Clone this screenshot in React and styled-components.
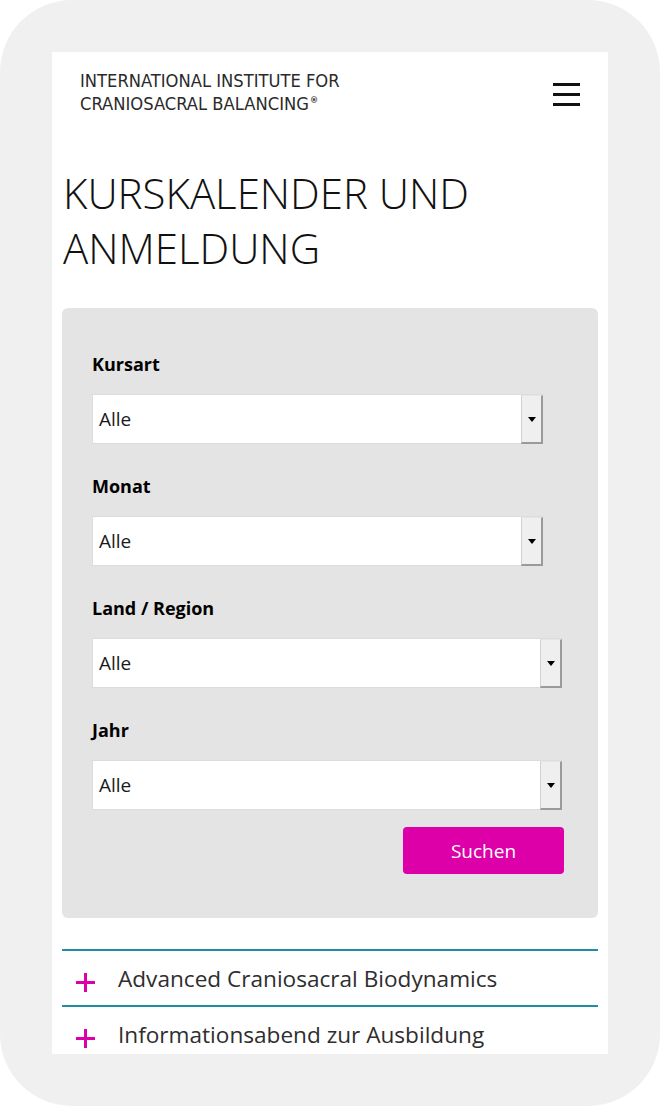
import React from "react";
import styled, { createGlobalStyle } from "styled-components";

const GlobalStyle = createGlobalStyle`
  html, body { margin: 0; padding: 0; background: #fff; }
  * { box-sizing: border-box; }
`;

const Frame = styled.div`
  width: 660px;
  height: 1106px;
  background: #f0f0f0;
  border-radius: 72px;
  padding: 52px;
`;

const Screen = styled.div`
  background: #fff;
  height: 1002px;
  overflow: hidden;
  font-family: "Open Sans", "Noto Sans", sans-serif;
  color: #111;
`;

const Header = styled.header`
  display: flex;
  justify-content: space-between;
  align-items: flex-start;
  padding: 17px 28px 0 28px;
  height: 113px;
`;

const Logo = styled.div`
  font-family: "DejaVu Sans Condensed", "DejaVu Sans", sans-serif;
  font-weight: 300;
  font-size: 18.2px;
  line-height: 23px;
  color: #2a2a2a;
  sup {
    font-size: 9px;
    vertical-align: 7px;
    line-height: 0;
    margin-left: 1px;
    font-weight: 700;
  }
`;

const Burger = styled.button`
  margin-top: 14px;
  width: 27px;
  padding: 0;
  border: 0;
  background: none;
  display: flex;
  flex-direction: column;
  gap: 7px;
  span {
    display: block;
    height: 3px;
    background: #111;
  }
`;

const Content = styled.main`
  padding: 0 10px;
`;

const Title = styled.h1`
  margin: 0 0 33px 1px;
  font-weight: 300;
  font-size: 42px;
  line-height: 55px;
  letter-spacing: 0;
  color: #111;
`;

const Panel = styled.form`
  background: #e4e4e4;
  border-radius: 6px;
  padding: 44px 34px 44px 30px;
  display: flex;
  flex-direction: column;
  gap: 30px;
`;

const Field = styled.div`
  display: flex;
  flex-direction: column;
  gap: 18px;
`;

const Label = styled.label`
  font-weight: 700;
  font-size: 18px;
  line-height: 24px;
  color: #000;
`;

const Select = styled.div`
  width: ${(p) => p.$width}px;
  height: 50px;
  background: #fff;
  border: 1px solid #dcdcdc;
  display: flex;
  align-items: stretch;
`;

const Value = styled.span`
  flex: 1;
  display: flex;
  align-items: center;
  padding-left: 6px;
  font-size: 19px;
  color: #1a1a1a;
`;

const Arrow = styled.span`
  width: 22px;
  margin: 0 -1px -1px 0;
  background: #efefef;
  border-top: 1px solid #e6e6e6;
  border-left: 1px solid #d0d0d0;
  border-right: 2px solid #9a9a9a;
  border-bottom: 2px solid #9a9a9a;
  display: flex;
  align-items: center;
  justify-content: center;
  &::after {
    content: "";
    border-left: 4px solid transparent;
    border-right: 4px solid transparent;
    border-top: 5px solid #000;
  }
`;

const Actions = styled.div`
  display: flex;
  justify-content: flex-end;
  margin-top: -13px;
`;

const Button = styled.button`
  width: 161px;
  height: 47px;
  border: 0;
  border-radius: 4px;
  background: #dd00a8;
  color: #fff;
  font-family: "Open Sans", "Noto Sans", sans-serif;
  font-size: 19px;
`;

const Accordion = styled.div`
  margin-top: 31px;
`;

const Item = styled.div`
  display: flex;
  align-items: center;
  height: 56px;
  border-top: 2px solid #1f8ea0;
  padding-left: 14px;
  gap: 23px;
  font-size: 22.6px;
  color: #2e2e2e;
`;

const Plus = styled.span`
  position: relative;
  width: 19px;
  height: 19px;
  margin-top: 8px;
  &::before, &::after {
    content: "";
    position: absolute;
    background: #dd00a8;
  }
  &::before { left: 0; right: 0; top: 8px; height: 3px; }
  &::after { top: 0; bottom: 0; left: 8px; width: 3px; }
`;

const fields = [
  { label: "Kursart", width: 451 },
  { label: "Monat", width: 451 },
  { label: "Land / Region", width: 470 },
  { label: "Jahr", width: 470 },
];

const courses = ["Advanced Craniosacral Biodynamics", "Informationsabend zur Ausbildung"];

export default function App() {
  return (
    <>
      <GlobalStyle />
      <Frame>
        <Screen>
          <Header>
            <Logo>
              INTERNATIONAL INSTITUTE FOR
              <br />
              CRANIOSACRAL BALANCING<sup>®</sup>
            </Logo>
            <Burger aria-label="Menü">
              <span />
              <span />
              <span />
            </Burger>
          </Header>
          <Content>
            <Title>
              KURSKALENDER UND
              <br />
              ANMELDUNG
            </Title>
            <Panel>
              {fields.map((f) => (
                <Field key={f.label}>
                  <Label>{f.label}</Label>
                  <Select $width={f.width}>
                    <Value>Alle</Value>
                    <Arrow />
                  </Select>
                </Field>
              ))}
              <Actions>
                <Button type="button">Suchen</Button>
              </Actions>
            </Panel>
            <Accordion>
              {courses.map((c) => (
                <Item key={c}>
                  <Plus />
                  <span>{c}</span>
                </Item>
              ))}
            </Accordion>
          </Content>
        </Screen>
      </Frame>
    </>
  );
}
